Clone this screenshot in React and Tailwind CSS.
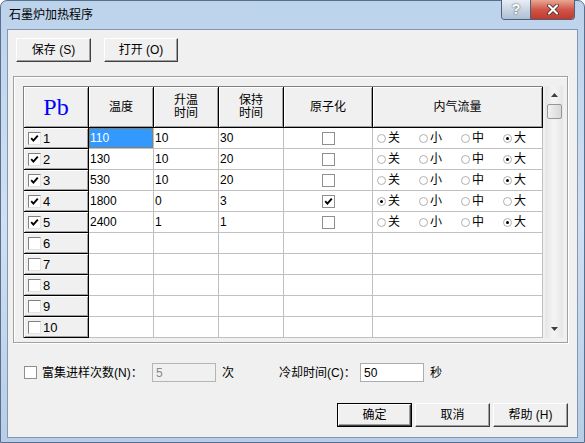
import React from "react";

const F = "font-['Liberation_Sans','Noto_Sans_CJK_SC',sans-serif]";

function Check({ checked, flat }) {
  return (
    <span
      className={
        flat
          ? "inline-flex w-[13px] h-[13px] items-center justify-center bg-white border border-[#8f8f8f]"
          : "inline-flex w-[13px] h-[13px] items-center justify-center bg-white border border-t-[#808080] border-l-[#808080] border-r-[#e3e3e3] border-b-[#e3e3e3]"
      }
    >
      {checked && (
        <svg width="9" height="9" viewBox="0 0 9 9">
          <path d="M1.2 4.2 L3.4 6.6 L7.8 1.6" stroke="#000" strokeWidth="1.9" fill="none" />
        </svg>
      )}
    </span>
  );
}

function Radio({ on, label }) {
  return (
    <span className="flex items-center w-[42px] shrink-0">
      <span className="w-[9px] h-[9px] rounded-full border border-[#b0b0b0] bg-white flex items-center justify-center">
        {on && <span className="w-[3px] h-[3px] rounded-full bg-black" />}
      </span>
      <span className="ml-[2px] text-[12px] leading-none">{label}</span>
    </span>
  );
}

function Btn({ children, w = "w-[75px]", def }) {
  return (
    <div
      className={
        def
          ? "h-[24px] w-[75px] border border-black flex"
          : "h-[24px] " + w + " flex"
      }
    >
      <div className="flex-1 flex items-center justify-center bg-[#f0f0f0] border border-t-white border-l-white border-r-[#404040] border-b-[#404040] shadow-[inset_-1px_-1px_0_#a0a0a0] text-[12px] text-black">
        {children}
      </div>
    </div>
  );
}

const rows = [
  { on: true, t: "110", r: "10", h: "30", a: false, f: 3 },
  { on: true, t: "130", r: "10", h: "20", a: false, f: 3 },
  { on: true, t: "530", r: "10", h: "20", a: false, f: 3 },
  { on: true, t: "1800", r: "0", h: "3", a: true, f: 0 },
  { on: true, t: "2400", r: "1", h: "1", a: false, f: 3 },
  { on: false }, { on: false }, { on: false }, { on: false }, { on: false },
];

const hdr =
  "bg-[#f0f0f0] border-r border-b border-black shadow-[inset_1px_1px_0_#fff,inset_-1px_-1px_0_#a0a0a0] flex items-center justify-center text-[12px] leading-[13px] text-center";
const cell = "bg-white border-r border-b border-[#c0c0c0] text-[12px] flex items-center pl-[1px]";

export default function App() {
  return (
    <div className={"w-[585px] h-[443px] overflow-hidden " + F}>
      <div className="w-[585px] h-[443px] rounded-t-[7px] border border-[#5b6f8c] bg-gradient-to-b from-[#bcd3ec] via-[#cfe0f2] to-[#b7cee8] flex flex-col">
        {/* title bar */}
        <div className="h-[28px] flex items-start justify-between shrink-0">
          <div className="pl-[8px] pt-[6px] text-[12px] text-black leading-[16px]">石墨炉加热程序</div>
          <div className="flex mr-[9px] -mt-[1px] h-[20px] rounded-b-[4px] border border-t-0 border-[#4f5f78] overflow-hidden">
            <div className="w-[29px] flex items-center justify-center bg-gradient-to-b from-[#e8eef6] via-[#cbd6e4] to-[#aebfd4] border-r border-[#4f5f78]">
              <span className="text-[14px] font-bold text-white [text-shadow:0_0_2px_#333] font-['Liberation_Sans']">?</span>
            </div>
            <div className="w-[43px] flex items-center justify-center bg-gradient-to-b from-[#e8a593] via-[#d0564a] to-[#c0392b]">
              <svg width="12" height="11" viewBox="0 0 12 11">
                <path d="M2 1.5 L10 9.5 M10 1.5 L2 9.5" stroke="#3a2020" strokeWidth="3.6" strokeLinecap="round" />
                <path d="M2 1.5 L10 9.5 M10 1.5 L2 9.5" stroke="#fff" strokeWidth="2.2" strokeLinecap="round" />
              </svg>
            </div>
          </div>
        </div>
        {/* client */}
        <div className="ml-[6px] w-[571px] h-[409px] border border-[#8496b0] bg-[#f0f0f0] flex flex-col text-black">
          <div className="flex pl-[8px] pt-[8px] gap-[13px]">
            <Btn>保存 (S)</Btn>
            <Btn w="w-[74px]">打开 (O)</Btn>
          </div>
          {/* group */}
          <div className="ml-[5px] mt-[14px] w-[555px] h-[267px] border border-[#a0a0a0] shadow-[inset_1px_1px_0_#fff,1px_1px_0_#fff] flex pl-[9px] pt-[9px]">
            <div className="border-l border-t border-[#808080] h-[252px] grid grid-cols-[65px_65px_65px_65px_89px_170px] grid-rows-[41px_repeat(10,21px)]">
              <div className={hdr}>
                <span className="font-['Liberation_Serif'] text-[#0000ff] text-[24px] leading-none">Pb</span>
              </div>
              <div className={hdr}>温度</div>
              <div className={hdr}>升温<br />时间</div>
              <div className={hdr}>保持<br />时间</div>
              <div className={hdr}>原子化</div>
              <div className={hdr}>内气流量</div>
              {rows.map((r, i) => (
                <React.Fragment key={i}>
                  <div className="bg-[#f0f0f0] border-r border-b border-black shadow-[inset_1px_1px_0_#fff,inset_-1px_-1px_0_#a0a0a0] flex items-center pl-[4px] gap-[2px] text-[13px]">
                    <Check checked={r.on} />
                    <span className="leading-none">{i + 1}</span>
                  </div>
                  {i === 0 ? (
                    <div className="border-r border-b border-[#c0c0c0] bg-white p-0">
                      <div className="w-full h-full bg-[#3399ff] text-white text-[12px] flex items-center pl-[1px] outline-1 outline-dotted outline-[#c07000] -outline-offset-1">
                        {r.t}
                      </div>
                    </div>
                  ) : (
                    <div className={cell}>{r.t}</div>
                  )}
                  <div className={cell}>{r.r}</div>
                  <div className={cell}>{r.h}</div>
                  <div className="bg-white border-r border-b border-[#c0c0c0] flex items-center justify-center">
                    {r.t !== undefined && <Check checked={r.a} flat />}
                  </div>
                  <div className="bg-white border-r border-b border-[#c0c0c0] flex items-center pl-[4px]">
                    {r.t !== undefined && (
                      <>
                        <Radio on={r.f === 0} label="关" />
                        <Radio on={r.f === 1} label="小" />
                        <Radio on={r.f === 2} label="中" />
                        <Radio on={r.f === 3} label="大" />
                      </>
                    )}
                  </div>
                </React.Fragment>
              ))}
            </div>
            {/* scrollbar */}
            <div className="ml-[2px] w-[18px] h-[252px] bg-gradient-to-r from-[#e6e6e6] via-[#f4f4f4] to-[#e6e6e6] flex flex-col items-center">
              <div className="h-[18px] w-full flex items-center justify-center">
                <svg width="7" height="4" viewBox="0 0 7 4"><path d="M0 4 L3.5 0 L7 4 Z" fill="#404040" /></svg>
              </div>
              <div className="w-[15px] h-[15px] rounded-[2px] border border-[#979797] bg-gradient-to-r from-[#f2f2f2] to-[#d8d8d8]" />
              <div className="flex-1" />
              <div className="h-[18px] w-full flex items-center justify-center">
                <svg width="7" height="4" viewBox="0 0 7 4"><path d="M0 0 L3.5 4 L7 0 Z" fill="#404040" /></svg>
              </div>
            </div>
          </div>
          {/* bottom row */}
          <div className="flex items-center mt-[20px] h-[19px] text-[12px]">
            <div className="ml-[16px] flex"><Check flat /></div>
            <span className="ml-[5px] w-[110px] shrink-0">富集进样次数(N)：</span>
            <div className="w-[64px] h-[19px] bg-[#f0f0f0] border border-[#b5b5b5] text-[#8a8a8a] text-[12px] pl-[3px] flex items-center shrink-0">5</div>
            <span className="ml-[6px] w-[12px] shrink-0">次</span>
            <span className="ml-[45px] w-[81px] shrink-0">冷却时间(C)：</span>
            <div className="w-[64px] h-[19px] bg-white border border-[#abadb3] text-[12px] pl-[3px] flex items-center shrink-0">50</div>
            <span className="ml-[6px]">秒</span>
          </div>
          <div className="flex justify-end gap-[3px] mt-[21px] pr-[9px]">
            <Btn def>确定</Btn>
            <Btn>取消</Btn>
            <Btn>帮助 (H)</Btn>
          </div>
        </div>
      </div>
    </div>
  );
}
